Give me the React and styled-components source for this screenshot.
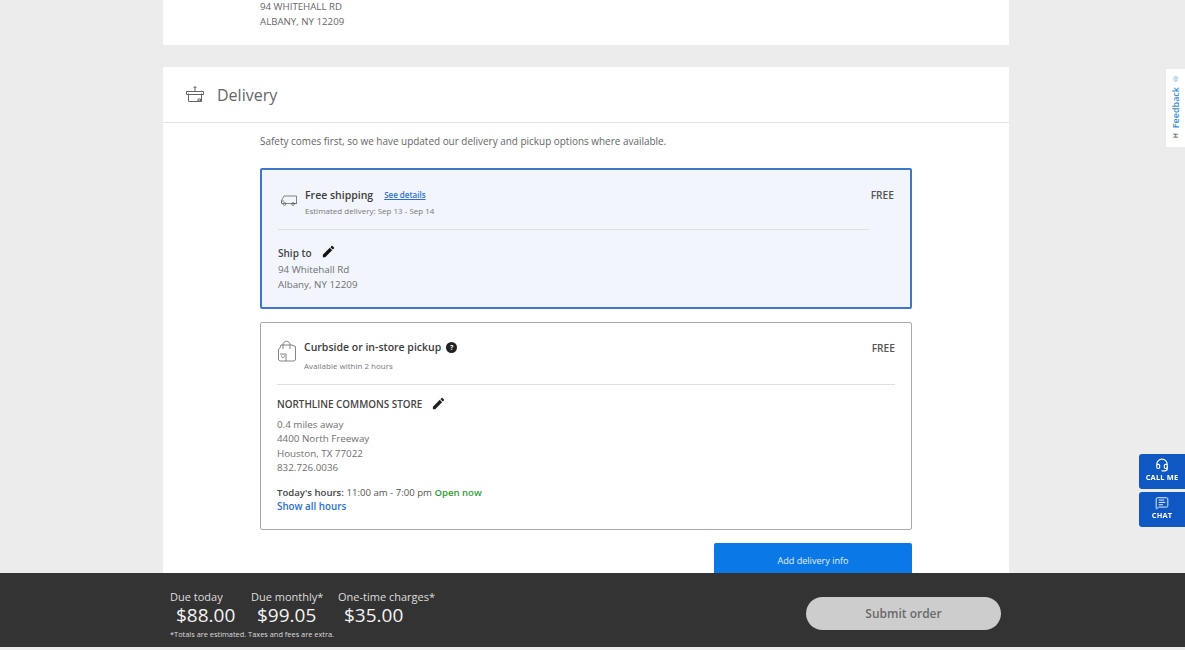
import React from "react";
import styled, { createGlobalStyle } from "styled-components";
import { Headset, MessageSquareText } from "lucide-react";
import { MdEdit } from "react-icons/md";

const GlobalStyle = createGlobalStyle`
  html, body {
    margin: 0;
    height: 100%;
    overflow: hidden;
    background: #ececec;
    font-family: "Open Sans", "Noto Sans", "Liberation Sans", sans-serif;
    color: #555;
  }
`;

const Column = styled.main`
  width: 846px;
  margin-left: 163px;
  display: flex;
  flex-direction: column;
  gap: 22px;
`;

const TopCard = styled.section`
  height: 45px;
  box-sizing: border-box;
  padding: 0 0 16px 97px;
  background: #fff;
  display: flex;
  flex-direction: column;
  justify-content: flex-end;
  font-size: 9.7px;
  line-height: 15px;
  color: #666;
`;

const Card = styled.section`
  background: #fff;
  height: 560px;
`;

const CardHeader = styled.header`
  height: 56px;
  box-sizing: border-box;
  padding-left: 22px;
  display: flex;
  align-items: center;
  gap: 12px;
  border-bottom: 1px solid #e3e3e3;
  font-size: 16px;
  color: #666;
`;

const CardBody = styled.div`
  padding: 11px 97px 0;
  display: flex;
  flex-direction: column;
`;

const Intro = styled.p`
  margin: 0 0 19px;
  font-size: 9.95px;
  line-height: 15px;
  color: #666;
`;

const Option = styled.div`
  box-sizing: border-box;
  width: 652px;
  height: ${(p) => p.$height}px;
  margin-bottom: 13px;
  padding: ${(p) => (p.$selected ? "18px 16px 0" : "17px 16px 0")};
  background: ${(p) => (p.$selected ? "#f2f6fc" : "#fff")};
  border: ${(p) => (p.$selected ? "2px solid #3f76cf" : "1px solid #aaa")};
  border-radius: 2px;
`;

const OptionRow = styled.div`
  display: flex;
  align-items: flex-start;
  gap: ${(p) => p.$gap}px;
  height: ${(p) => p.$height}px;
  padding-left: ${(p) => p.$indent || 0}px;
`;

const TruckSlot = styled.div`
  padding-top: 2px;
`;

const OptionText = styled.div`
  flex: 1;
  display: flex;
  flex-direction: column;
  gap: ${(p) => p.$gap}px;
`;

const OptionTitle = styled.div`
  display: flex;
  align-items: center;
  gap: ${(p) => p.$gap}px;
  font-size: 10.5px;
  line-height: 14px;
  font-weight: 600;
  color: #3c3c3c;
`;

const Small = styled.div`
  font-size: 8px;
  line-height: 12px;
  color: #777;
`;

const SeeDetails = styled.a`
  font-size: 8px;
  color: #2d6fd2;
  text-decoration: underline;
`;

const Free = styled.span`
  margin-top: ${(p) => p.$top}px;
  font-size: 10.2px;
  line-height: 14px;
  font-weight: 600;
  color: #555;
`;

const Divider = styled.hr`
  margin: 0 ${(p) => p.$right || 0}px 0 0;
  border: 0;
  border-top: 1px solid #e0e0e0;
`;

const AddressHead = styled.div`
  display: flex;
  align-items: center;
  gap: 9px;
  height: 16px;
  margin-top: ${(p) => p.$top}px;
  font-size: ${(p) => p.$size}px;
  font-weight: 600;
  color: #444;
`;

const Pencil = styled(MdEdit)`
  margin-top: ${(p) => p.$lift}px;
`;

const AddressLines = styled.div`
  margin-top: ${(p) => p.$top}px;
  font-size: 9.8px;
  line-height: ${(p) => p.$line}px;
  color: #6f6f6f;
`;

const Hours = styled.div`
  margin-top: 10px;
  font-size: 9.6px;
  line-height: 14px;
  color: #555;
`;

const Strong = styled.b`
  font-weight: 600;
  color: #444;
`;

const OpenNow = styled.span`
  font-weight: 600;
  color: #2f9e35;
`;

const ShowHours = styled.a`
  display: block;
  font-size: 9.8px;
  font-weight: 600;
  color: #2d6fd2;
`;

const InfoDot = styled.span`
  width: 11px;
  height: 11px;
  border-radius: 50%;
  background: #222;
  color: #fff;
  font-size: 7px;
  font-weight: 700;
  line-height: 11px;
  text-align: center;
`;

const PrimaryButton = styled.button`
  align-self: flex-end;
  width: 198px;
  height: 44px;
  border: 0;
  border-radius: 2px;
  background: #0a78e6;
  color: #e6f0fb;
  font: inherit;
  font-size: 9.1px;
  padding-bottom: 10px;
`;

const BottomBar = styled.footer`
  position: fixed;
  left: 0;
  right: 0;
  top: 573px;
  height: 74px;
  box-sizing: border-box;
  padding: 17px 184px 0 170px;
  background: #333;
  display: flex;
  justify-content: space-between;
  align-items: flex-start;
`;

const Totals = styled.div`
  display: flex;
  flex-direction: column;
`;

const TotalRow = styled.div`
  display: flex;
`;

const Total = styled.div`
  width: ${(p) => p.$width}px;
  display: flex;
  flex-direction: column;
`;

const TotalLabel = styled.span`
  font-size: 11px;
  line-height: 14px;
  color: #ddd;
`;

const TotalValue = styled.span`
  margin-left: 6px;
  font-size: 19px;
  line-height: 22px;
  color: #f2f2f2;
`;

const Footnote = styled.span`
  margin-top: 3px;
  font-size: 7.4px;
  line-height: 10px;
  color: #ddd;
`;

const SubmitButton = styled.button`
  width: 195px;
  height: 33px;
  margin-top: 7px;
  border: 0;
  border-radius: 17px;
  background: #cdcdcd;
  color: #6a6a6a;
  font: inherit;
  font-size: 12px;
  font-weight: 600;
`;

const Feedback = styled.aside`
  position: fixed;
  top: 69px;
  right: 0;
  width: 19px;
  height: 78px;
  box-sizing: border-box;
  padding: 5px 0 9px;
  background: #fff;
  display: flex;
  flex-direction: column;
  align-items: center;
  justify-content: space-between;
`;

const FeedbackText = styled.span`
  writing-mode: vertical-rl;
  transform: rotate(180deg);
  font-size: ${(p) => p.$size || 9}px;
  line-height: 12px;
  font-weight: 600;
  color: ${(p) => p.$color || "#3a8fd0"};
`;

const SideButtons = styled.div`
  position: fixed;
  top: 454px;
  right: 0;
  display: flex;
  flex-direction: column;
  gap: 3px;
`;

const SideButton = styled.button`
  width: 46px;
  height: 35px;
  padding: 4px 0 0;
  border: 0;
  border-radius: 3px 0 0 3px;
  background: #0f57c2;
  color: #fff;
  display: flex;
  flex-direction: column;
  align-items: center;
  gap: 1px;
  font: inherit;
  font-size: 7.4px;
  line-height: 9px;
  font-weight: 700;
  letter-spacing: 0.2px;
`;

const BoxIcon = () => (
  <svg width="20" height="20" viewBox="0 0 20 20" fill="none" stroke="#666" strokeWidth="1">
    <path d="M3.5 8.5v8h13v-8M1.5 6.5h17v3h-17zM10 6.5V1.5M8.5 3l1.5-1.5L11.5 3" />
    <path d="M13 14h2.5v2H13z" />
  </svg>
);

const TruckIcon = () => (
  <svg width="18" height="14" viewBox="0 0 18 14" fill="none" stroke="#666" strokeWidth="0.8">
    <path d="M4 3h12.5v7.5H1.5V7.5L4 3zM1 8h3M12 10.5h5" />
    <circle cx="4.5" cy="11" r="1.4" />
    <circle cx="13" cy="11" r="1.4" />
  </svg>
);

const BagIcon = () => (
  <svg width="19" height="22" viewBox="0 0 19 22" fill="none" stroke="#666" strokeWidth="0.8">
    <path d="M3 8l-1.5 1v11l1.5 1h14l1.5-1V6.5L15 5H4L3 8zM6 5c0-5 7-5 7 0v4M6 5v4" />
    <path d="M3 14h6v7M4.5 15.5c0 3 3 3 3 0" />
  </svg>
);

export default function App() {
  return (
    <>
      <GlobalStyle />
      <Column>
        <TopCard>
          <div>94 WHITEHALL RD</div>
          <div>ALBANY, NY 12209</div>
        </TopCard>
        <Card>
          <CardHeader>
            <BoxIcon />
            Delivery
          </CardHeader>
          <CardBody>
            <Intro>Safety comes first, so we have updated our delivery and pickup options where available.</Intro>
            <Option $selected $height={141}>
              <OptionRow $indent={2} $gap={7} $height={41}>
                <TruckSlot>
                  <TruckIcon />
                </TruckSlot>
                <OptionText $gap={3}>
                  <OptionTitle $gap={11}>
                    Free shipping <SeeDetails>See details</SeeDetails>
                  </OptionTitle>
                  <Small>Estimated delivery: Sep 13 - Sep 14</Small>
                </OptionText>
                <Free $top={0}>FREE</Free>
              </OptionRow>
              <Divider $right={25} />
              <AddressHead $top={15} $size={10}>
                Ship to <Pencil size={15} color="#111" $lift={-4} />
              </AddressHead>
              <AddressLines $top={1} $line={15}>
                <div>94 Whitehall Rd</div>
                <div>Albany, NY 12209</div>
              </AddressLines>
            </Option>
            <Option $height={208}>
              <OptionRow $gap={8} $height={44}>
                <BagIcon />
                <OptionText $gap={6}>
                  <OptionTitle $gap={5}>
                    Curbside or in-store pickup <InfoDot>?</InfoDot>
                  </OptionTitle>
                  <Small>Available within 2 hours</Small>
                </OptionText>
                <Free $top={1}>FREE</Free>
              </OptionRow>
              <Divider />
              <AddressHead $top={11} $size={9.9}>
                NORTHLINE COMMONS STORE <Pencil size={15} color="#222" $lift={-2} />
              </AddressHead>
              <AddressLines $top={6} $line={14.4}>
                <div>0.4 miles away</div>
                <div>4400 North Freeway</div>
                <div>Houston, TX 77022</div>
                <div>832.726.0036</div>
              </AddressLines>
              <Hours>
                <Strong>Today's hours:</Strong> 11:00 am - 7:00 pm <OpenNow>Open now</OpenNow>
                <ShowHours>Show all hours</ShowHours>
              </Hours>
            </Option>
            <PrimaryButton>Add delivery info</PrimaryButton>
          </CardBody>
        </Card>
      </Column>
      <BottomBar>
        <Totals>
          <TotalRow>
            <Total $width={81}>
              <TotalLabel>Due today</TotalLabel>
              <TotalValue>$88.00</TotalValue>
            </Total>
            <Total $width={87}>
              <TotalLabel>Due monthly*</TotalLabel>
              <TotalValue>$99.05</TotalValue>
            </Total>
            <Total $width={110}>
              <TotalLabel>One-time charges*</TotalLabel>
              <TotalValue>$35.00</TotalValue>
            </Total>
          </TotalRow>
          <Footnote>*Totals are estimated. Taxes and fees are extra.</Footnote>
        </Totals>
        <SubmitButton>Submit order</SubmitButton>
      </BottomBar>
      <Feedback>
        <FeedbackText $size={7} $color="#8bbbe0">®</FeedbackText>
        <FeedbackText>Feedback</FeedbackText>
        <FeedbackText $size={7} $color="#555">H</FeedbackText>
      </Feedback>
      <SideButtons>
        <SideButton>
          <Headset size={14} strokeWidth={2} />
          CALL ME
        </SideButton>
        <SideButton>
          <MessageSquareText size={14} strokeWidth={1.5} />
          CHAT
        </SideButton>
      </SideButtons>
    </>
  );
}
